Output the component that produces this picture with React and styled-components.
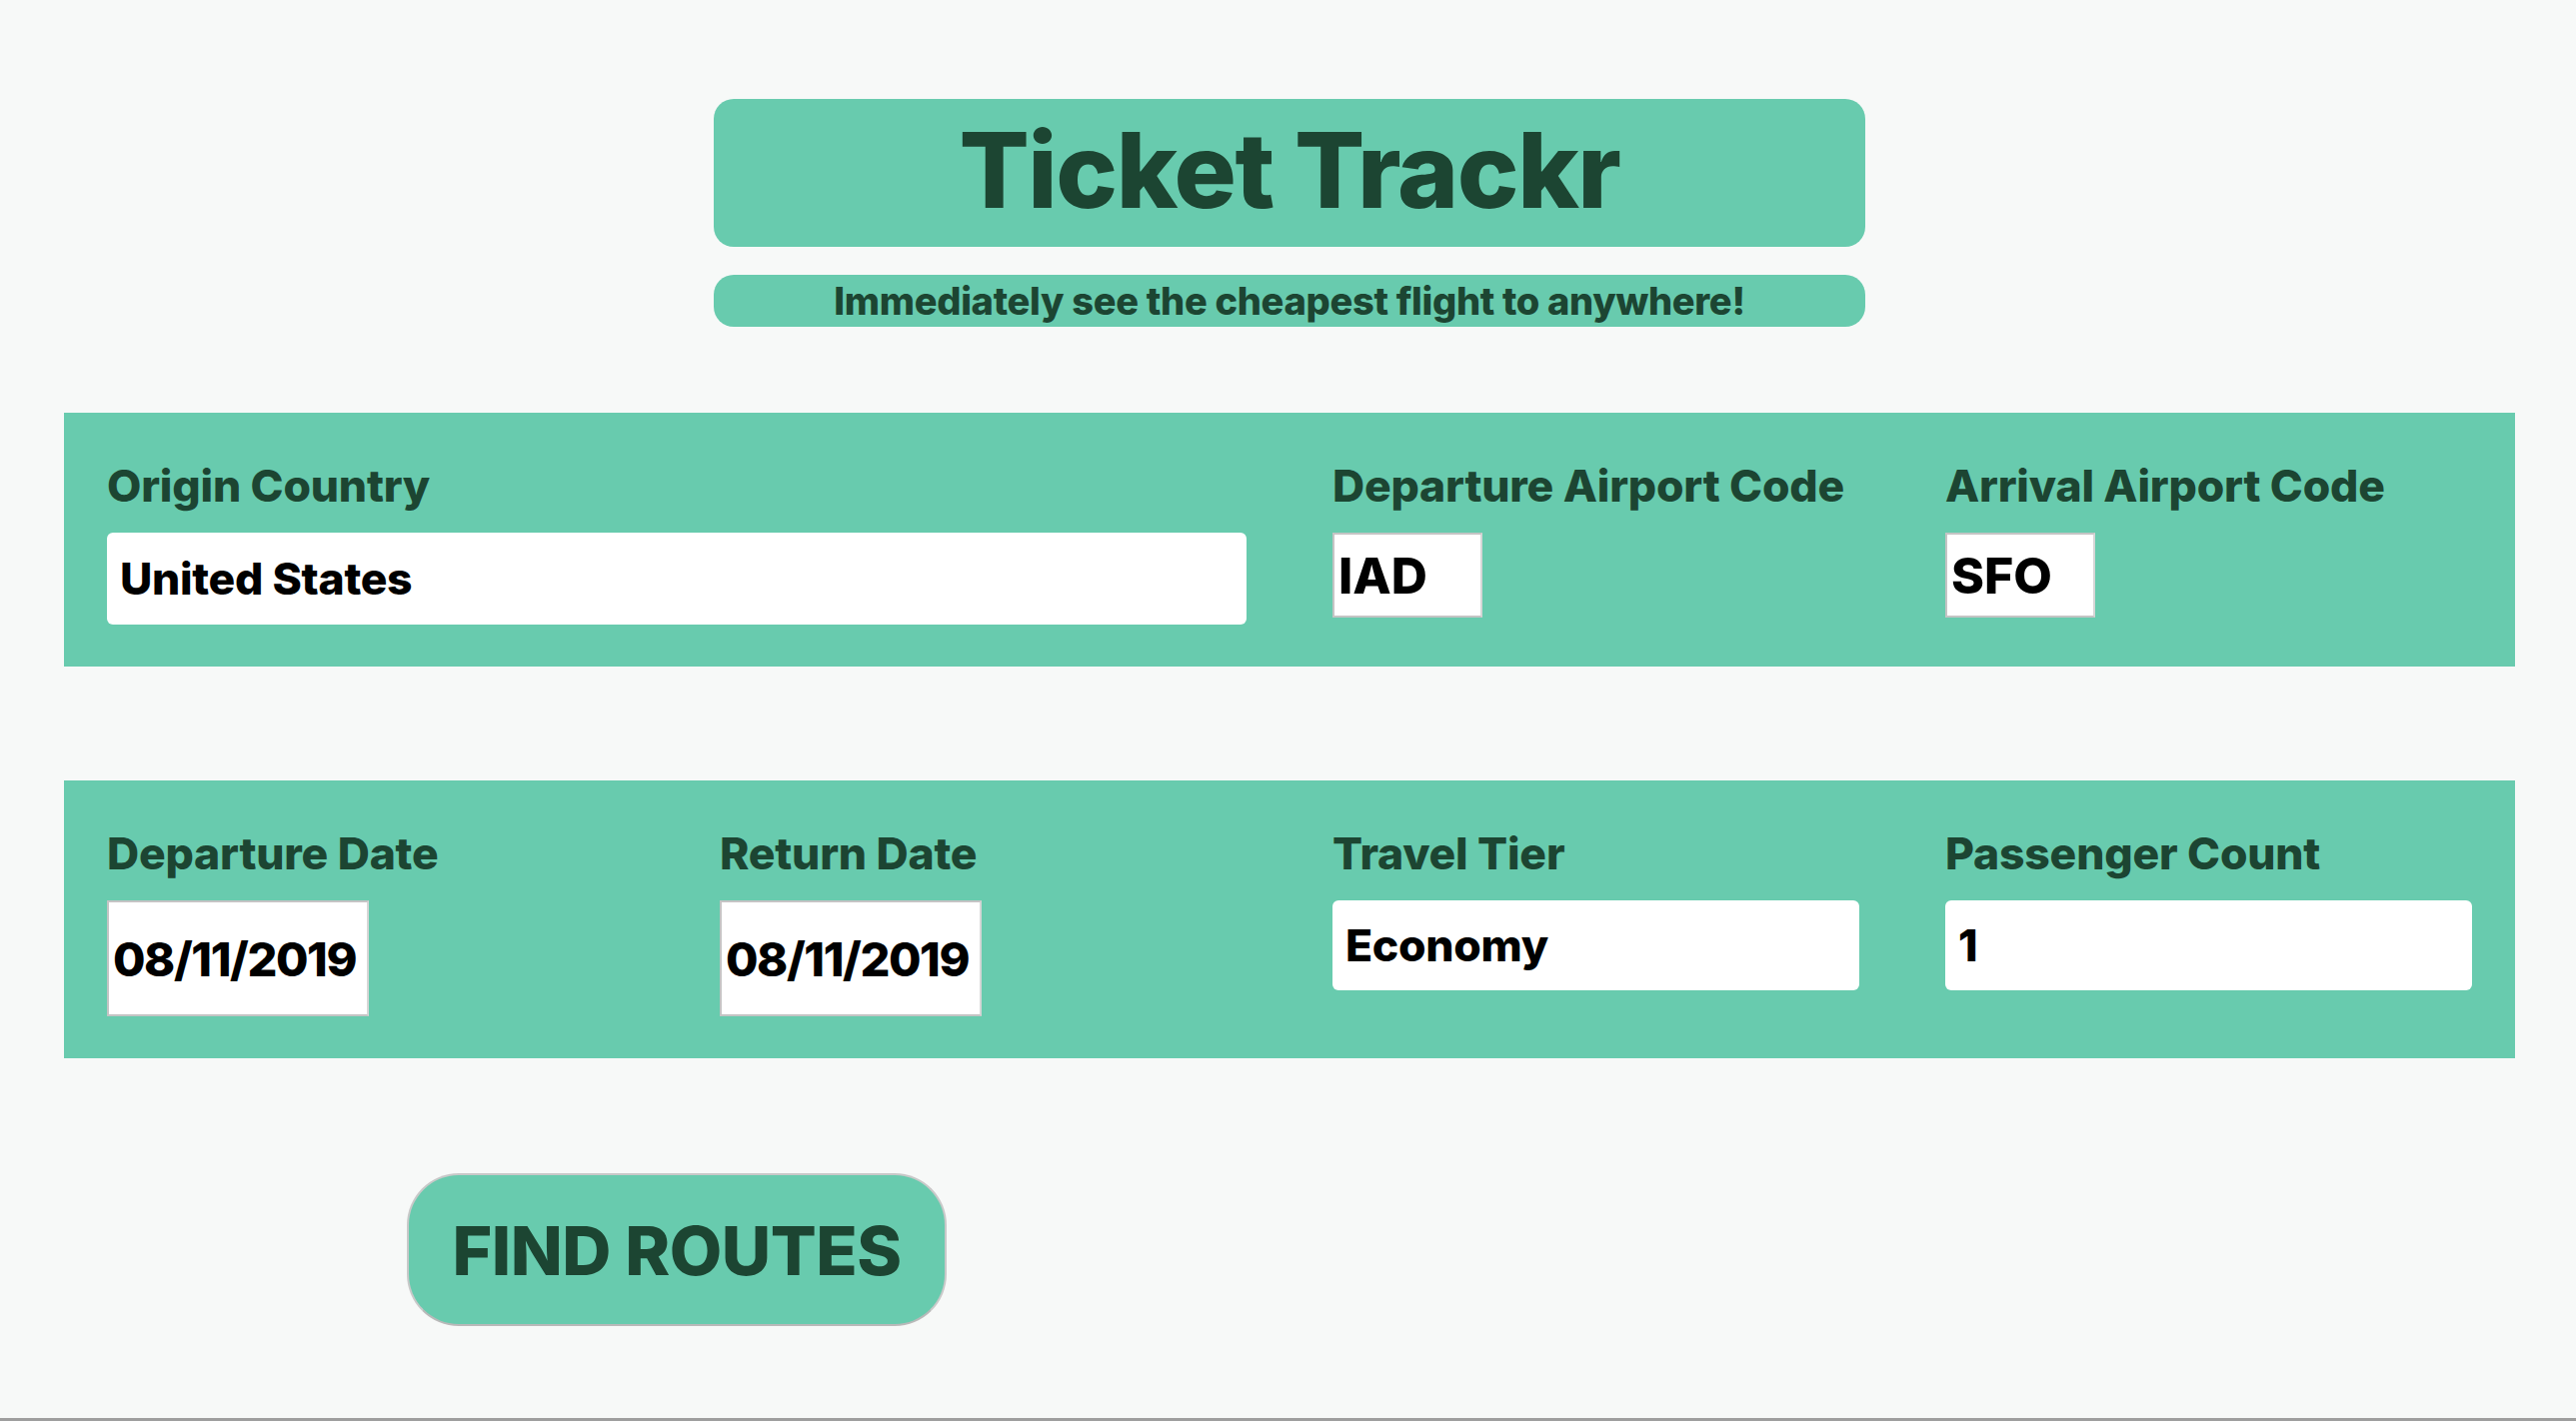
import React from "react";
import styled, { createGlobalStyle } from "styled-components";

const GREEN = "#68cbae";
const DARK = "#1c4532";

const GlobalStyle = createGlobalStyle`
  html, body {
    margin: 0;
    padding: 0;
    background: #f7f9f8;
  }
  body {
    font-family: Inter, "Noto Sans", sans-serif;
    font-variant-numeric: proportional-nums;
  }
  *, *::before, *::after {
    box-sizing: border-box;
  }
`;

const Page = styled.div`
  height: 1422px;
  border-bottom: 3px solid #9e9e9e;
  padding: 99px 61px 0 64px;
  display: flex;
  flex-direction: column;
`;

const Header = styled.header`
  align-self: center;
  width: 1152px;
  display: flex;
  flex-direction: column;
  gap: 28px;
`;

const TitleBox = styled.div`
  height: 148px;
  border-radius: 20px;
  background: ${GREEN};
  display: flex;
  align-items: center;
  justify-content: center;
  padding-bottom: 6px;
`;

const Title = styled.h1`
  margin: 0;
  font-size: 104px;
  line-height: 1;
  font-weight: 800;
  color: ${DARK};
  letter-spacing: -1.5px;
`;

const SubtitleBox = styled.div`
  height: 52px;
  border-radius: 20px;
  background: ${GREEN};
  display: flex;
  align-items: center;
  justify-content: center;
`;

const Subtitle = styled.p`
  margin: 0;
  font-size: 38px;
  line-height: 1;
  font-weight: 800;
  color: ${DARK};
  letter-spacing: -0.3px;
`;

const Panel = styled.section`
  margin-top: ${(p) => p.$top}px;
  display: grid;
  grid-template-columns: repeat(4, 1fr);
  align-items: start;
  padding: 41px 0 42px;
  background: ${GREEN};
`;

const Field = styled.div`
  grid-column: span ${(p) => p.$span || 1};
  padding: 0 43px;
  display: flex;
  flex-direction: column;
  align-items: flex-start;
  gap: 15px;
`;

const Label = styled.label`
  font-size: 44.5px;
  line-height: 64px;
  font-weight: 800;
  color: ${DARK};
  white-space: nowrap;
  letter-spacing: -0.2px;
`;

const WideInput = styled.input`
  width: 100%;
  height: ${(p) => p.$h}px;
  border: none;
  border-radius: 6px;
  padding: 0 13px;
  background: #fff;
  color: #000;
  font-family: inherit;
  font-size: 44.5px;
  font-weight: 800;
  letter-spacing: -0.3px;
  outline: none;
`;

const BoxInput = styled.input`
  width: ${(p) => p.$w}px;
  height: ${(p) => p.$h}px;
  border: 2px solid;
  border-color: #c4c4c4 #d6d6d6 #c4c4c4 #c4c4c4;
  padding: 0 2px 0 4px;
  background: #fff;
  color: #000;
  font-family: inherit;
  font-size: ${(p) => p.$fs || 50}px;
  font-weight: 800;
  letter-spacing: ${(p) => p.$ls || 0}px;
  font-variant-numeric: proportional-nums;
  font-feature-settings: "pnum" 1;
  outline: none;
`;

const ButtonRow = styled.div`
  margin-top: 115px;
  display: grid;
  grid-template-columns: 1fr 1fr;
`;

const FindButton = styled.button`
  justify-self: center;
  width: 540px;
  height: 153px;
  border-radius: 52px;
  border: 2px solid #c9c9c9;
  border-bottom-color: #b9b9b9;
  background: ${GREEN};
  color: ${DARK};
  font-family: inherit;
  font-size: 68px;
  font-weight: 800;
  letter-spacing: -0.5px;
  padding: 0;
  cursor: pointer;
`;

export default function App() {
  return (
    <>
      <GlobalStyle />
      <Page>
        <Header>
          <TitleBox>
            <Title>Ticket Trackr</Title>
          </TitleBox>
          <SubtitleBox>
            <Subtitle>Immediately see the cheapest flight to anywhere!</Subtitle>
          </SubtitleBox>
        </Header>

        <Panel $top={86}>
          <Field $span={2}>
            <Label>Origin Country</Label>
            <WideInput $h={92} defaultValue="United States" />
          </Field>
          <Field>
            <Label>Departure Airport Code</Label>
            <BoxInput $w={150} $h={85} defaultValue="IAD" />
          </Field>
          <Field>
            <Label>Arrival Airport Code</Label>
            <BoxInput $w={150} $h={85} defaultValue="SFO" />
          </Field>
        </Panel>

        <Panel $top={114}>
          <Field>
            <Label>Departure Date</Label>
            <BoxInput $w={262} $h={116} $fs={47} $ls={-1.4} defaultValue="08/11/2019" />
          </Field>
          <Field>
            <Label>Return Date</Label>
            <BoxInput $w={262} $h={116} $fs={47} $ls={-1.4} defaultValue="08/11/2019" />
          </Field>
          <Field>
            <Label>Travel Tier</Label>
            <WideInput $h={90} defaultValue="Economy" />
          </Field>
          <Field>
            <Label>Passenger Count</Label>
            <WideInput $h={90} defaultValue="1" />
          </Field>
        </Panel>

        <ButtonRow>
          <FindButton>FIND ROUTES</FindButton>
        </ButtonRow>
      </Page>
    </>
  );
}
